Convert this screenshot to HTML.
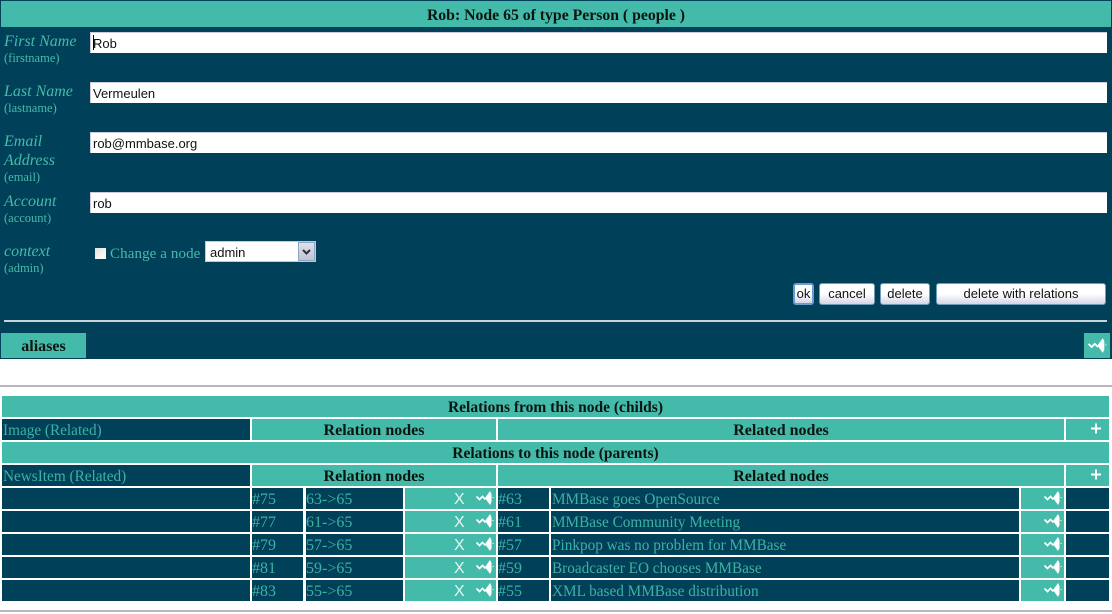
<!DOCTYPE html>
<html><head><meta charset="utf-8"><style>
html,body{margin:0;padding:0;background:#fff;width:1112px;height:614px;overflow:hidden}
div,svg{position:absolute}
.s{font-family:"Liberation Serif",serif;white-space:nowrap}
.t{background:#44bbaa}.d{background:#004058}
.l{font:italic 16px "Liberation Serif",serif;color:#44bbaa;left:4px;white-space:nowrap}
.m{font:12.5px "Liberation Serif",serif;color:#44bbaa;left:4px;white-space:nowrap}
.i{left:90px;width:1017px;height:21px;background:#fff;border-top:1px solid #ccd;border-left:1px solid #ccd;box-sizing:border-box;font:13px/21px "Liberation Sans",sans-serif;color:#111;padding-left:2px}
.b{top:283px;height:22px;box-sizing:border-box;background:linear-gradient(#fff 0%,#fff 50%,#d4d6e4 100%);border-radius:3px;border:1px solid #6f9ab8;font:13px/19px "Liberation Sans",sans-serif;color:#111;text-align:center}
.c{display:flex;align-items:center;height:21px;padding-top:3px;box-sizing:border-box;font:15.25px "Liberation Serif",serif;white-space:nowrap;overflow:hidden}
.h{justify-content:center;font-weight:bold;font-size:16px;color:#0c1410}
.r{font-size:15.5px}
.x{color:#3fb0a4;padding-left:1px}
.n{font-size:16px;padding-left:0}
.k{font:16px "Liberation Sans",sans-serif;color:#e4f6f2;left:454px;height:21px;line-height:23px}
</style></head><body>
<svg width="0" height="0" style="left:0;top:0"><symbol id="a" viewBox="0 0 19 16"><path d="M0.5 5.5L3.5 8.5L6.5 5.5L9.5 8.5" fill="none" stroke="#fff" stroke-width="1.7"/><path d="M9 7L14 0L15.5 3L15.5 11L14 14Z" fill="#fff"/><rect x="16.5" y="6" width="1" height="1" fill="#fff"/></symbol></svg>

<div class="d" style="left:0;top:0;width:1112px;height:359px"></div>
<div class="t s" style="left:1px;top:1px;width:1110px;height:26px;text-align:center;font:bold 15.75px/29px 'Liberation Serif',serif;color:#0c1410">Rob: Node 65 of type Person ( people )</div>

<div class="l" style="top:33px">First Name</div><div class="m" style="top:51px">(firstname)</div>
<div class="l" style="top:83px">Last Name</div><div class="m" style="top:101px">(lastname)</div>
<div class="l" style="top:133px">Email</div><div class="l" style="top:152px">Address</div><div class="m" style="top:170px">(email)</div>
<div class="l" style="top:193px">Account</div><div class="m" style="top:211px">(account)</div>
<div class="l" style="top:243px">context</div><div class="m" style="top:261px">(admin)</div>

<div class="i" style="top:32px">Rob</div>
<div style="left:93px;top:35px;width:1px;height:15px;background:#000"></div>
<div class="i" style="top:82px">Vermeulen</div>
<div class="i" style="top:132px">rob@mmbase.org</div>
<div class="i" style="top:192px">rob</div>

<div style="left:95px;top:248px;width:11px;height:11px;background:linear-gradient(135deg,#e4e4dc,#fff)"></div>
<div class="s" style="left:110px;top:246px;font-size:15px;color:#44bbaa;letter-spacing:.1px">Change a node</div>
<div style="left:205px;top:241px;width:111px;height:21px;background:#fff;box-sizing:border-box;border:1px solid #bcd;font:13px/21px 'Liberation Sans',sans-serif;color:#111;padding-left:4px">admin</div>
<div style="left:298px;top:242px;width:17px;height:19px;background:linear-gradient(#dfe1ec,#c0c3d6);border:1px solid #8fa6c0;box-sizing:border-box"></div>
<svg style="left:298px;top:242px" width="17" height="19"><path d="M5 8L8.5 11.5L12 8" fill="none" stroke="#2a3040" stroke-width="2"/></svg>

<div class="b" style="left:793px;width:21px;border:2px solid #6f9ad0;line-height:18px">ok</div>
<div class="b" style="left:819px;width:56px">cancel</div>
<div class="b" style="left:880px;width:50px">delete</div>
<div class="b" style="left:936px;width:170px">delete with relations</div>

<div style="left:4px;top:320px;width:1103px;height:2px;background:#c8d4d8"></div>
<div class="t s" style="left:1px;top:333px;width:85px;height:25px;text-align:center;font:bold 16px/27px 'Liberation Serif',serif;color:#0c1410">aliases</div>
<div class="t" style="left:1084px;top:333px;width:26px;height:25px"></div>
<svg style="left:1088px;top:338px" width="20" height="17" viewBox="0 0 19 16"><use href="#a"/></svg>

<div style="left:0;top:385px;width:1112px;height:2px;background:#b8b8bc"></div>
<div style="left:0;top:610px;width:1112px;height:2px;background:#b8b8bc"></div>

<div class="t c h r" style="left:2px;top:396px;width:1107px">Relations from this node (childs)</div>
<div class="d c x" style="left:2px;top:419px;width:248px">Image (Related)</div>
<div class="t c h" style="left:252px;top:419px;width:244px">Relation nodes</div>
<div class="t c h" style="left:498px;top:419px;width:566px">Related nodes</div>
<div class="t" style="left:1066px;top:419px;width:43px;height:21px"></div>
<svg style="left:1090px;top:422px" width="12" height="14"><path d="M1 6.5H11M6 1.5V11.5" stroke="#fff" stroke-width="2" fill="none"/></svg>

<div class="t c h r" style="left:2px;top:442px;width:1107px">Relations to this node (parents)</div>
<div class="d c x" style="left:2px;top:465px;width:248px">NewsItem (Related)</div>
<div class="t c h" style="left:252px;top:465px;width:244px">Relation nodes</div>
<div class="t c h" style="left:498px;top:465px;width:566px">Related nodes</div>
<div class="t" style="left:1066px;top:465px;width:43px;height:21px"></div>
<svg style="left:1090px;top:468px" width="12" height="14"><path d="M1 6.5H11M6 1.5V11.5" stroke="#fff" stroke-width="2" fill="none"/></svg>

<div class="d" style="left:2px;top:488px;width:248px;height:21px"></div>
<div class="d c x n" style="left:252px;top:488px;width:51px">#75</div>
<div class="d c x n" style="left:306px;top:488px;width:97px">63-&gt;65</div>
<div class="t" style="left:405px;top:488px;width:91px;height:21px"></div>
<div class="k" style="top:488px">X</div>
<svg style="left:476px;top:491px" width="19" height="16"><use href="#a"/></svg>
<div class="d c x n" style="left:498px;top:488px;width:51px">#63</div>
<div class="d c x" style="left:551px;top:488px;width:468px">MMBase goes OpenSource</div>
<div class="t" style="left:1021px;top:488px;width:43px;height:21px"></div>
<svg style="left:1044px;top:491px" width="19" height="16"><use href="#a"/></svg>
<div class="d" style="left:1066px;top:488px;width:43px;height:21px"></div>

<div class="d" style="left:2px;top:511px;width:248px;height:21px"></div>
<div class="d c x n" style="left:252px;top:511px;width:51px">#77</div>
<div class="d c x n" style="left:306px;top:511px;width:97px">61-&gt;65</div>
<div class="t" style="left:405px;top:511px;width:91px;height:21px"></div>
<div class="k" style="top:511px">X</div>
<svg style="left:476px;top:514px" width="19" height="16"><use href="#a"/></svg>
<div class="d c x n" style="left:498px;top:511px;width:51px">#61</div>
<div class="d c x" style="left:551px;top:511px;width:468px">MMBase Community Meeting</div>
<div class="t" style="left:1021px;top:511px;width:43px;height:21px"></div>
<svg style="left:1044px;top:514px" width="19" height="16"><use href="#a"/></svg>
<div class="d" style="left:1066px;top:511px;width:43px;height:21px"></div>

<div class="d" style="left:2px;top:534px;width:248px;height:21px"></div>
<div class="d c x n" style="left:252px;top:534px;width:51px">#79</div>
<div class="d c x n" style="left:306px;top:534px;width:97px">57-&gt;65</div>
<div class="t" style="left:405px;top:534px;width:91px;height:21px"></div>
<div class="k" style="top:534px">X</div>
<svg style="left:476px;top:537px" width="19" height="16"><use href="#a"/></svg>
<div class="d c x n" style="left:498px;top:534px;width:51px">#57</div>
<div class="d c x" style="left:551px;top:534px;width:468px">Pinkpop was no problem for MMBase</div>
<div class="t" style="left:1021px;top:534px;width:43px;height:21px"></div>
<svg style="left:1044px;top:537px" width="19" height="16"><use href="#a"/></svg>
<div class="d" style="left:1066px;top:534px;width:43px;height:21px"></div>

<div class="d" style="left:2px;top:557px;width:248px;height:21px"></div>
<div class="d c x n" style="left:252px;top:557px;width:51px">#81</div>
<div class="d c x n" style="left:306px;top:557px;width:97px">59-&gt;65</div>
<div class="t" style="left:405px;top:557px;width:91px;height:21px"></div>
<div class="k" style="top:557px">X</div>
<svg style="left:476px;top:560px" width="19" height="16"><use href="#a"/></svg>
<div class="d c x n" style="left:498px;top:557px;width:51px">#59</div>
<div class="d c x" style="left:551px;top:557px;width:468px">Broadcaster EO chooses MMBase</div>
<div class="t" style="left:1021px;top:557px;width:43px;height:21px"></div>
<svg style="left:1044px;top:560px" width="19" height="16"><use href="#a"/></svg>
<div class="d" style="left:1066px;top:557px;width:43px;height:21px"></div>

<div class="d" style="left:2px;top:580px;width:248px;height:21px"></div>
<div class="d c x n" style="left:252px;top:580px;width:51px">#83</div>
<div class="d c x n" style="left:306px;top:580px;width:97px">55-&gt;65</div>
<div class="t" style="left:405px;top:580px;width:91px;height:21px"></div>
<div class="k" style="top:580px">X</div>
<svg style="left:476px;top:583px" width="19" height="16"><use href="#a"/></svg>
<div class="d c x n" style="left:498px;top:580px;width:51px">#55</div>
<div class="d c x" style="left:551px;top:580px;width:468px">XML based MMBase distribution</div>
<div class="t" style="left:1021px;top:580px;width:43px;height:21px"></div>
<svg style="left:1044px;top:583px" width="19" height="16"><use href="#a"/></svg>
<div class="d" style="left:1066px;top:580px;width:43px;height:21px"></div>
</body></html>
